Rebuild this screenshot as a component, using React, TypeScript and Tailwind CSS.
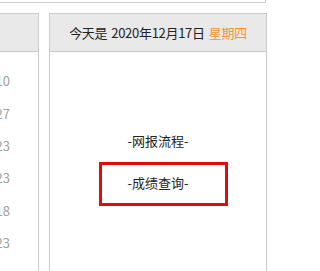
import React from "react";

const dates = ["2020-12-10", "2020-12-27", "2020-11-23", "2020-11-23", "2020-11-18", "2020-10-23"];

export default function App() {
  return (
    <div
      className="w-[279px] h-[271px] overflow-hidden bg-white relative"
      style={{ fontFamily: '"Noto Sans CJK SC", "Noto Sans", sans-serif' }}
    >
      <div className="h-[3px] w-[266px] border-b border-r border-[#cfcfcf]" />
      <div className="flex mt-[10px] gap-[10px]">
        {/* left panel, mostly off-screen */}
        <div className="w-[120px] ml-[-81px] shrink-0 flex flex-col border border-[#c9c9c9] h-[300px]">
          <div className="h-[38px] bg-[#e9e9e9] border-b border-[#c9c9c9]" />
          <div className="pt-[13px] flex flex-col">
            {dates.map((d, i) => (
              <div
                key={i}
                className="h-[32.3px] flex items-center justify-end pr-[28px] text-[13px] text-[#a0a0a0]"
              >
                {d}
              </div>
            ))}
          </div>
        </div>
        {/* right panel */}
        <div className="w-[218px] shrink-0 flex flex-col border border-[#c9c9c9] h-[300px]">
          <div className="h-[38px] bg-[#e9e9e9] border-b border-[#c9c9c9] flex items-center justify-center gap-[4px] text-[13px] text-[#222] whitespace-nowrap tracking-[-0.3px]">
            <span>今天是</span>
            <span>2020年12月17日</span>
            <span className="text-[#f0923a]">星期四</span>
          </div>
          <div className="flex flex-col items-center pt-[78px] text-[13px] text-[#222]">
            <div className="h-[22px] flex items-center">-网报流程-</div>
            <div className="relative mt-[20px] h-[22px] flex items-center">
              -成绩查询-
              <div className="absolute left-[-28px] top-[-10px] w-[129px] h-[44px] border-[3px] border-[#e00c0c]" />
            </div>
          </div>
        </div>
      </div>
    </div>
  );
}
